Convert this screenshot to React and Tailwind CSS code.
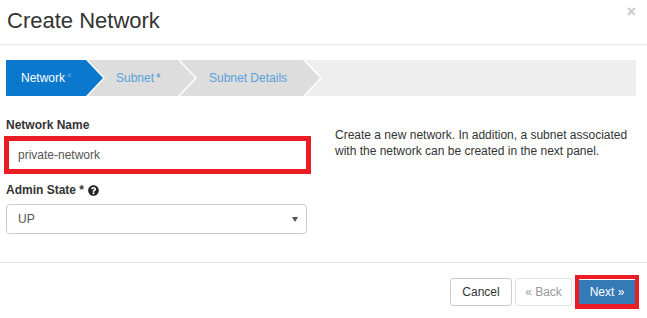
import React from "react";
import { FaQuestionCircle } from "react-icons/fa";

const arrow = "polygon(0 0, calc(100% - 17px) 0, 100% 50%, calc(100% - 17px) 100%, 0 100%)";

function Step({ label, star, active, first, width, pad, z }) {
  return (
    <div
      className={`relative h-full bg-white pr-[2px] ${first ? "" : "-ml-[17px]"}`}
      style={{ clipPath: arrow, zIndex: z }}
    >
      <div
        className={`flex h-full items-center text-[12px] ${
          active ? "bg-[#0a78cc] text-white" : "bg-[#dddddd] text-[#5aa0da]"
        }`}
        style={{ clipPath: arrow, width, paddingLeft: pad }}
      >
        {label}
        {star && (
          <span className={`ml-[2px] ${active ? "text-[#5ea3e0]" : "text-[#4a90d0]"}`}>*</span>
        )}
      </div>
    </div>
  );
}

export default function App() {
  return (
    <div
      className="w-[647px] h-[318px] bg-white text-[#333] overflow-hidden"
      style={{ fontFamily: '"Liberation Sans", Arial, sans-serif' }}
    >
      {/* header */}
      <div className="relative h-[45px] border-b border-[#e5e5e5] pl-[7px] pt-[7px]">
        <h3 className="text-[22px] leading-[28px] text-[#333]">Create Network</h3>
        <span className="absolute right-[11px] top-[0px] text-[16px] font-bold text-[#c8c8c8]">×</span>
      </div>

      {/* body */}
      <div className="pl-[6px] pr-[11px] pt-[15px]">
        <div className="flex h-[36px] bg-[#eeeeee]">
          <Step label="Network" star active first width={97} pad={15} z={3} />
          <Step label="Subnet" star width={107} pad={28} z={2} />
          <Step label="Subnet Details" width={140} pad={29} z={1} />
        </div>

        <div className="flex mt-[21px]">
          <div className="w-[301px]">
            <label className="block text-[12px] leading-[17px] font-bold text-[#333]">Network Name</label>
            <div className="mt-[2px] -ml-[2px] w-[307px] h-[38px] border-[5px] border-[#ec1c24] flex items-center pl-[9px] text-[12px] text-[#555]">
              private-network
            </div>
            <label className="mt-[8px] flex items-center text-[12px] leading-[17px] font-bold text-[#333]">
              Admin State *<FaQuestionCircle className="ml-[4px] w-[11px] h-[11px] text-[#222]" />
            </label>
            <div className="mt-[5px] h-[30px] rounded-[4px] border border-[#cccccc] flex items-center justify-between pl-[11px] pr-[8px] text-[12px] text-[#555]">
              <span>UP</span>
              <span className="w-0 h-0 border-x-[3px] border-x-transparent border-t-[5px] border-t-[#555]" />
            </div>
          </div>
          <div className="ml-[28px] mt-[10px] text-[12px] leading-[16px] text-[#333]">
            Create a new network. In addition, a subnet associated
            <br />
            with the network can be created in the next panel.
          </div>
        </div>
      </div>

      {/* footer */}
      <div className="mt-[28px] border-t border-[#e5e5e5] flex justify-end items-center pt-[12px] pr-[8px] gap-[3px]">
        <button className="h-[28px] w-[62px] rounded-[3px] border border-[#cccccc] bg-white text-[12px] text-[#333]">
          Cancel
        </button>
        <button className="h-[28px] w-[57px] rounded-[3px] border border-[#cccccc] bg-white text-[12px] text-[#333] opacity-50">
          « Back
        </button>
        <div className="border-[4px] border-b-[5px] border-[#ec1c24]">
          <button className="h-[24px] w-[56px] bg-[#337ab7] text-[12px] text-white">Next »</button>
        </div>
      </div>
    </div>
  );
}
